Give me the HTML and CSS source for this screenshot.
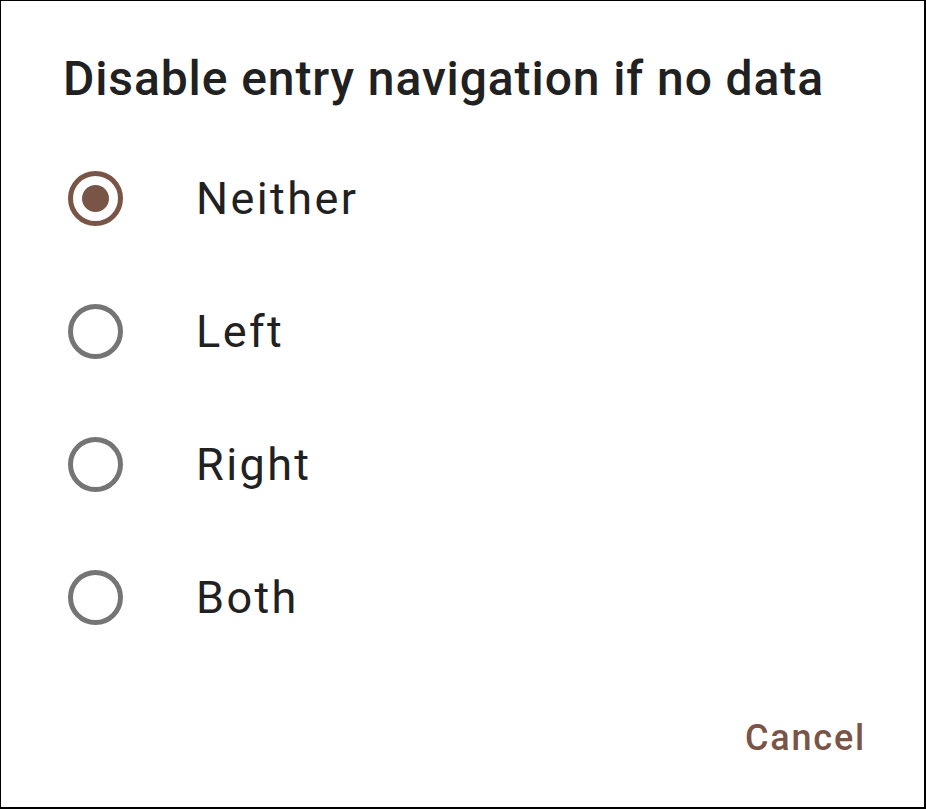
FILE: index.html
```html
<!DOCTYPE html>
<html>
<head>
<meta charset="utf-8">
<link rel="stylesheet" href="styles.css">
</head>
<body>
<div class="dialog">
  <h1 class="title">Disable entry navigation if no data</h1>
  <div class="options">
    <div class="option">
      <span class="radio checked"><span class="dot"></span></span>
      <span class="label">Neither</span>
    </div>
    <div class="option">
      <span class="radio"></span>
      <span class="label">Left</span>
    </div>
    <div class="option">
      <span class="radio"></span>
      <span class="label">Right</span>
    </div>
    <div class="option">
      <span class="radio"></span>
      <span class="label">Both</span>
    </div>
  </div>
  <div class="actions">
    <button class="btn">Cancel</button>
  </div>
</div>
</body>
</html>
```
FILE: styles.css
```css
html, body {
  margin: 0;
  padding: 0;
  background: #ffffff;
}
.dialog {
  box-sizing: border-box;
  width: 926px;
  height: 809px;
  border-style: solid;
  border-color: #000000;
  border-width: 1px 2px 2px 1px;
  background: #ffffff;
  font-family: Roboto, "Liberation Sans", sans-serif;
  color: #212121;
  padding-top: 48px;
}
.title {
  margin: 0;
  padding-left: 62px;
  font-size: 48px;
  font-weight: 500;
  letter-spacing: 0.9px;
  line-height: 60px;
  height: 60px;
  color: #212121;
  white-space: nowrap;
}
.options {
  margin-top: 23px;
  display: flex;
  flex-direction: column;
}
.option {
  height: 133px;
  display: flex;
  align-items: center;
  padding-left: 67px;
}
.radio {
  box-sizing: border-box;
  width: 55px;
  height: 55px;
  border-radius: 50%;
  border: 5.5px solid #757575;
  display: flex;
  align-items: center;
  justify-content: center;
  flex: none;
}
.radio.checked {
  border-color: #795548;
}
.dot {
  width: 27px;
  height: 27px;
  border-radius: 50%;
  background: #795548;
}
.label {
  margin-left: 73px;
  font-size: 45px;
  font-weight: 400;
  letter-spacing: 2.4px;
  color: #212121;
}
.actions {
  margin-top: 34px;
  height: 80px;
  display: flex;
  justify-content: flex-end;
  align-items: center;
  padding-right: 58px;
}
.btn {
  border: none;
  background: none;
  padding: 0;
  font-family: Roboto, "Liberation Sans", sans-serif;
  font-size: 36px;
  font-weight: 500;
  letter-spacing: 1.8px;
  color: #795548;
  cursor: pointer;
}
```
